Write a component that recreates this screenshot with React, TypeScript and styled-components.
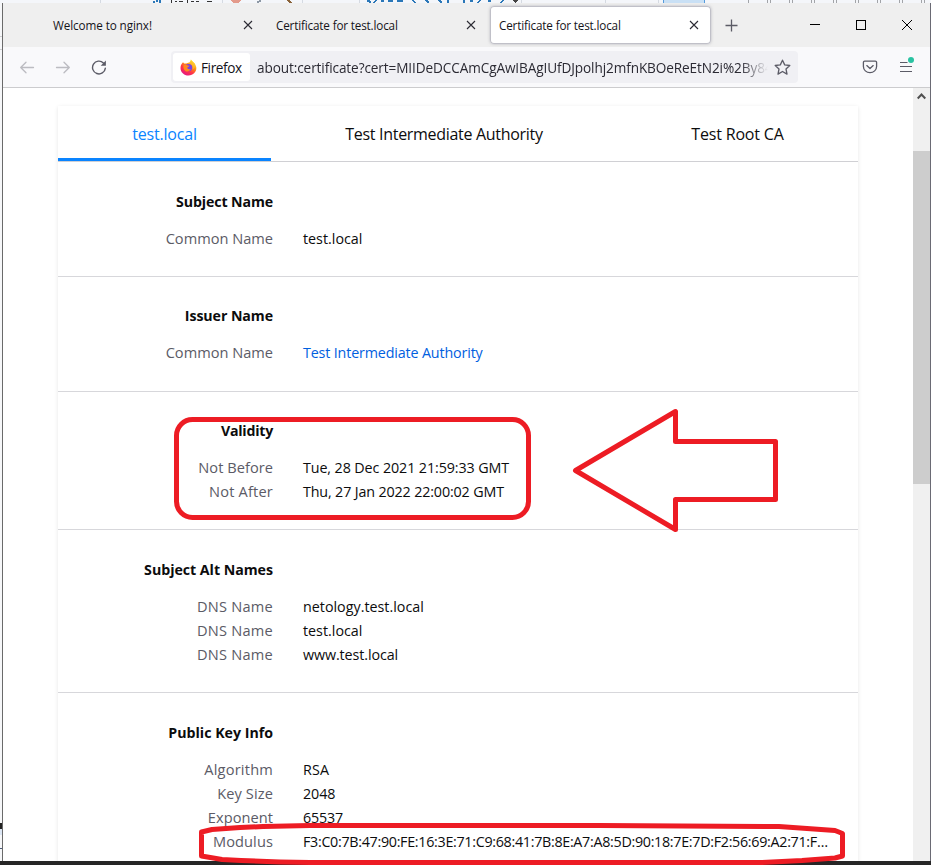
import React from "react";
import styled, { createGlobalStyle } from "styled-components";

const RED = "#ed1c24";

const Global = createGlobalStyle`
  * { box-sizing: border-box; }
  body { margin: 0; overflow: hidden; font-family: "Open Sans", "Noto Sans", sans-serif; color: #15141a; }
`;

const Desktop = styled.div`
  position: relative;
  display: flex;
  flex-direction: column;
  width: 931px;
  height: 865px;
  overflow: hidden;
  background: #262626;
`;

const BehindStrip = styled.div`
  height: 3px;
  flex: none;
  background: #f4f6fa;
  svg { display: block; }
`;

const Middle = styled.div`
  display: flex;
  height: 858px;
  flex: none;
`;

const BehindEdge = styled.div`
  width: 2px;
  flex: none;
  background: #f6f7f9;
  svg { display: block; }
`;

const Window = styled.div`
  flex: 1;
  min-width: 0;
  display: flex;
  flex-direction: column;
  border-left: 1px solid #6a6a6a;
  border-right: 1px solid #6a6a74;
  background: #fff;
`;

const TitleBar = styled.div`
  height: 44px;
  flex: none;
  display: flex;
  align-items: center;
  padding-left: 41px;
  background: #efefef;
`;

const BrowserTabs = styled.div`
  display: flex;
  gap: 2px;
  height: 38px;
`;

const BrowserTab = styled.div<{ $active?: boolean }>`
  width: 221px;
  display: flex;
  align-items: center;
  justify-content: space-between;
  padding: 0 12px 0 9px;
  border-radius: 4px;
  font-size: 11.7px;
  color: #15141a;
  background: ${(p) => (p.$active ? "#fff" : "transparent")};
  box-shadow: ${(p) => (p.$active ? "inset 0 0 0 1px #c0c0c8, 0 0 3px rgba(128,128,142,.5)" : "none")};
`;

const TabTitle = styled.span<{ $track: number }>`
  white-space: nowrap;
  letter-spacing: ${(p) => p.$track}px;
`;

const NewTab = styled.div`
  width: 41px;
  display: flex;
  justify-content: center;
`;

const Controls = styled.div`
  margin-left: auto;
  display: flex;
`;

const ControlButton = styled.div`
  width: 46px;
  height: 43px;
  display: flex;
  align-items: center;
  justify-content: center;
`;

const Toolbar = styled.div`
  height: 41px;
  flex: none;
  display: flex;
  align-items: center;
  padding: 0 6px;
  background: #f9f9fb;
  border-bottom: 1px solid #ccccce;
`;

const ToolButton = styled.div`
  width: 36px;
  height: 32px;
  display: flex;
  align-items: center;
  justify-content: center;
`;

const UrlBar = styled.div`
  margin-left: 54px;
  width: 627px;
  height: 32px;
  display: flex;
  align-items: center;
  padding: 2px;
  border-radius: 4px;
  background: #f0f0f4;
`;

const Identity = styled.div`
  width: 77px;
  height: 28px;
  display: flex;
  align-items: center;
  gap: 4px;
  padding-left: 7px;
  border-radius: 3px;
  background: #fff;
  font-size: 13.6px;
  letter-spacing: -0.4px;
  color: #15141a;
  span { padding-top: 1px; }
`;

const Url = styled.div`
  margin-left: 7px;
  padding-top: 1px;
  width: 511px;
  overflow: hidden;
  white-space: nowrap;
  font-size: 13.6px;
  letter-spacing: -0.1px;
  color: #2b2a33;
  mask-image: linear-gradient(to right, #000 483px, transparent 511px);
`;

const StarSlot = styled.div`
  width: 28px;
  display: flex;
  justify-content: center;
`;

const ToolbarEnd = styled.div`
  margin-left: auto;
  display: flex;
`;

const Viewport = styled.div`
  flex: 1;
  min-height: 0;
  display: flex;
  overflow: hidden;
`;

const Page = styled.div`
  flex: 1;
  padding: 18px 55px 0;
`;

const Card = styled.div`
  height: 800px;
  box-shadow: 0 1px 4px rgba(12, 12, 13, 0.1);
  background: #fff;
`;

const CertTabs = styled.div`
  display: flex;
  height: 56px;
  border-bottom: 1px solid #d0d0d4;
`;

const CertTab = styled.div<{ $w: number; $active?: boolean; $track?: number }>`
  width: ${(p) => p.$w}px;
  height: 55px;
  display: flex;
  align-items: center;
  justify-content: center;
  padding-top: 3px;
  border-bottom: 3px solid ${(p) => (p.$active ? "#0a84ff" : "transparent")};
  color: ${(p) => (p.$active ? "#0a84ff" : "#0c0c0d")};
  font-size: 16px;
  letter-spacing: ${(p) => p.$track ?? 0}px;
`;

const Section = styled.section<{ $h: number; $top: number }>`
  height: ${(p) => p.$h}px;
  padding-top: ${(p) => p.$top}px;
  border-bottom: 1px solid #d7d7db;
  font-size: 14.3px;
  line-height: 24px;
`;

const Heading = styled.h2<{ $track: number }>`
  margin: 0 0 13px;
  width: 215px;
  text-align: right;
  font-size: 14.2px;
  line-height: 24px;
  font-weight: 700;
  letter-spacing: ${(p) => p.$track}px;
  color: #0c0c0d;
`;

const Row = styled.div`
  display: flex;
  gap: 30px;
  height: 24px;
`;

const Label = styled.div<{ $track?: number }>`
  width: 215px;
  text-align: right;
  font-size: 14.6px;
  line-height: 22px;
  color: #5b5b66;
  letter-spacing: ${(p) => p.$track ?? 0}px;
`;

const Value = styled.div<{ $link?: boolean; $track?: number }>`
  white-space: nowrap;
  color: ${(p) => (p.$link ? "#0060df" : "#0c0c0d")};
  letter-spacing: ${(p) => p.$track ?? 0}px;
`;

const Scrollbar = styled.div`
  width: 17px;
  background: #f0f0f0;
  display: flex;
  flex-direction: column;
`;

const ScrollUp = styled.div`
  height: 63px;
  padding: 5px 0 0 4px;
  svg { display: block; }
`;

const Thumb = styled.div`
  height: 333px;
  background: #cdcdcd;
`;

const Markup = styled.svg`
  position: absolute;
  left: 0;
  top: 0;
  pointer-events: none;
`;

type Entry = { label: string; value: string; link?: boolean; lt?: number; vt?: number };
type Group = { title: string; h: number; track: number; top: number; rows: Entry[] };

const groups: Group[] = [
  { title: "Subject Name", h: 115, track: -0.12, top: 28, rows: [{ label: "Common Name", value: "test.local" }] },
  {
    title: "Issuer Name", h: 115, track: -0.08, top: 27,
    rows: [{ label: "Common Name", value: "Test Intermediate Authority", link: true, vt: -0.15 }],
  },
  {
    title: "Validity", h: 138, track: -0.25, top: 27,
    rows: [
      { label: "Not Before", value: "Tue, 28 Dec 2021 21:59:33 GMT", lt: 0.05, vt: -0.1 },
      { label: "Not After", value: "Thu, 27 Jan 2022 22:00:02 GMT", lt: 0.18, vt: -0.14 },
    ],
  },
  {
    title: "Subject Alt Names", h: 163, track: -0.03, top: 28,
    rows: [
      { label: "DNS Name", value: "netology.test.local", lt: 0.22 },
      { label: "DNS Name", value: "test.local", lt: 0.22 },
      { label: "DNS Name", value: "www.test.local", lt: 0.22, vt: -0.1 },
    ],
  },
  {
    title: "Public Key Info", h: 200, track: 0, top: 28,
    rows: [
      { label: "Algorithm", value: "RSA", lt: 0.2, vt: 0.2 },
      { label: "Key Size", value: "2048", lt: 0.1, vt: -0.1 },
      { label: "Exponent", value: "65537", lt: 0.05, vt: -0.2 },
      { label: "Modulus", value: "F3:C0:7B:47:90:FE:16:3E:71:C9:68:41:7B:8E:A7:A8:5D:90:18:7E:7D:F2:56:69:A2:71:F…", lt: 0.1, vt: -0.3 },
    ],
  },
];

const CloseIcon = () => (
  <svg width="10" height="10" viewBox="0 0 10 10" fill="none" stroke="#2b2a33" strokeWidth="1.1">
    <path d="M1 1l8 8M9 1l-8 8" />
  </svg>
);

const BackIcon = () => (
  <svg width="16" height="16" viewBox="0 -0.5 16 16" fill="none" stroke="#bcbcc1" strokeWidth="1.3" strokeLinecap="round" strokeLinejoin="round">
    <path d="M14.5 8H1.7M7 2.7L1.7 8 7 13.3" />
  </svg>
);

const ForwardIcon = () => (
  <svg width="16" height="16" viewBox="0 -0.5 16 16" fill="none" stroke="#bcbcc1" strokeWidth="1.3" strokeLinecap="round" strokeLinejoin="round">
    <path d="M1.5 8h12.8M9 2.7L14.3 8 9 13.3" />
  </svg>
);

const ReloadIcon = () => (
  <svg width="16" height="16" viewBox="0 -0.5 16 16" fill="none" stroke="#5b5b66" strokeWidth="1.4" strokeLinecap="round">
    <path d="M14.3 8.8A6.4 6.4 0 1 1 12.4 3.4" />
    <path d="M14.9 1v5.2H9.7z" fill="#5b5b66" stroke="none" />
  </svg>
);

const FirefoxIcon = () => (
  <svg width="17" height="17" viewBox="0 0 17 17">
    <defs>
      <linearGradient id="fx" x1="0.85" y1="0.05" x2="0.25" y2="1">
        <stop offset="0.05" stopColor="#fff44f" />
        <stop offset="0.35" stopColor="#ff980e" />
        <stop offset="0.65" stopColor="#ff3647" />
        <stop offset="1" stopColor="#e31587" />
      </linearGradient>
      <linearGradient id="fy" x1="0.8" y1="0" x2="0.4" y2="1">
        <stop offset="0" stopColor="#ffe226" />
        <stop offset="1" stopColor="#ff9a2e" />
      </linearGradient>
    </defs>
    <path d="M3 3.2L4.2 4.6 6.3 4.4 9.6 3.2 10.9.6C11.6 2 15.6 4.4 16.3 8.3 16.8 12.8 13.2 16.5 8.5 16.5 3.9 16.5.5 13 .5 8.9.5 6.5 1.5 4.7 3 3.2z" fill="url(#fx)" />
    <circle cx="8.6" cy="8.6" r="3.7" fill="#7542e5" />
    <path d="M3.6 6.2c1.4-.9 3.2-.4 4.2.3l1.7.2c-.3 1-1.8 1.2-2.2 1.9.1 1.8 2 2 3.4 1.1-.8 2.500-3.200 3.500-5.300 2.200C3.500 10.600 3 8 3.600 6.200z" fill="#ff8a1d" />
    <path d="M10.900.6c.3 2 .2 2.700-.9 3.700 1.900.8 3.300 3.200 2.400 6.100 2-.5 3.100-2.300 2.700-5.300C13.800 3.300 11.600 2.500 10.900.6z" fill="url(#fy)" />
  </svg>
);

const StarIcon = () => (
  <svg width="17" height="17" viewBox="0 0 17 17" fill="none" stroke="#5b5b66" strokeWidth="1.3" strokeLinejoin="round">
    <path d="M8.5 1.2l2.2 4.7 5.1.6-3.8 3.5 1 5.1-4.5-2.6L4 15.1l1-5.1L1.2 6.5l5.1-.6z" />
  </svg>
);

const PocketIcon = () => (
  <svg width="16" height="16" viewBox="0 0 16 16" fill="none" stroke="#5b5b66" strokeWidth="1.3" strokeLinecap="round" strokeLinejoin="round">
    <path d="M2.7 2.2h10.6a1.3 1.3 0 0 1 1.3 1.3V7.5a6.6 6.2 0 0 1-13.2 0V3.5a1.3 1.3 0 0 1 1.3-1.3z" />
    <path d="M4.8 6.6L8 9.5l3.2-2.9" />
  </svg>
);

const MenuIcon = () => (
  <svg width="20" height="20" viewBox="0 0 20 20" fill="none">
    <path d="M4 5.500h7.500M4 9.500h12M4 14.500h12" stroke="#5b5b66" strokeWidth="1.2" />
    <circle cx="15" cy="3" r="3" fill="#2ac3a2" />
  </svg>
);

const App = () => (
  <>
    <Global />
    <Desktop>
      <BehindStrip>
        <svg width="931" height="3" viewBox="0 0 931 3" shapeRendering="crispEdges">
          <path d="M100.500 0v3M222.500 0v3M302.500 0v3M359.500 0v3M521.500 0v3M605.500 0v3M658.500 0v3" stroke="#d5dae2" />
          <path d="M153 2h2M156 1h2M160 0v3M367 1h3M369 2h2M376 0l-2 3M381 1h3M388 1h5M397 1h6M412 0l4 3M426 0l3 3M439 0l3 3M448 0v3M464 0v3M470 1h3M480 0l-2 3M488 1h3M503 0l-2 3" stroke="#2a77b8" strokeWidth="1.5" />
          <path d="M171 0v3M175 1h2M179 1h4M187 0v3M191 1h3M196 1h3M207 1.500h5" stroke="#333" />
          <path d="M231 0h10l-3 3h-5z" fill="#e39a8b" />
          <path d="M257 3l4-3" stroke="#8d98a5" strokeWidth="2" />
          <path d="M287 0l5 3" stroke="#8a6238" strokeWidth="2" />
          <path d="M512 0h6l-3 3z" fill="#444" />
          <rect x="663" width="42" height="3" fill="#c9e0f5" />
          <path d="M663.500 0v3M704.500 0v3" stroke="#559bdc" />
          <path d="M748.500 0v3M767.500 0v3M770.500 0v3M789.500 0v3M792.500 0v3M811.500 0v3M814.500 0v3M833.500 0v3M836.500 0v3M855.500 0v3M858.500 0v3M877.500 0v3M880.500 0v3M899.500 0v3M902.500 0v3M921.500 0v3M924.500 0v3" stroke="#a2a4a8" />
        </svg>
      </BehindStrip>
      <Middle>
        <BehindEdge>
          <svg width="2" height="858" viewBox="0 0 2 858" shapeRendering="crispEdges">
            <path d="M0 33.500h2M0 46.500h2" stroke="#cfcfd2" />
            <rect y="820" width="2" height="6" fill="#222" />
            <rect y="826" width="2" height="6" fill="#dce6f4" />
            <path d="M0 845.500h2" stroke="#4b5a78" />
          </svg>
        </BehindEdge>
        <Window>
          <TitleBar>
            <BrowserTabs>
              <BrowserTab><TabTitle $track={-0.09}>Welcome to nginx!</TabTitle><CloseIcon /></BrowserTab>
              <BrowserTab><TabTitle $track={-0.16}>Certificate for test.local</TabTitle><CloseIcon /></BrowserTab>
              <BrowserTab $active><TabTitle $track={-0.16}>Certificate for test.local</TabTitle><CloseIcon /></BrowserTab>
            </BrowserTabs>
            <NewTab>
              <svg width="13" height="13" viewBox="0 0 13 13" stroke="#5b5b66" strokeWidth="1.3"><path d="M6.500.5v12M.5 6.500h12" /></svg>
            </NewTab>
            <Controls>
              <ControlButton><svg width="10" height="10" stroke="#000" shapeRendering="crispEdges"><path d="M0 4.500h10" /></svg></ControlButton>
              <ControlButton><svg width="10" height="10" stroke="#000" fill="none" shapeRendering="crispEdges"><path d="M.5.5h9v9h-9z" /></svg></ControlButton>
              <ControlButton><svg width="10" height="10" stroke="#000"><path d="M0 0l10 10M10 0L0 10" /></svg></ControlButton>
            </Controls>
          </TitleBar>
          <Toolbar>
            <ToolButton><BackIcon /></ToolButton>
            <ToolButton><ForwardIcon /></ToolButton>
            <ToolButton><ReloadIcon /></ToolButton>
            <UrlBar>
              <Identity><FirefoxIcon /><span>Firefox</span></Identity>
              <Url>about:certificate?cert=MIIDeDCCAmCgAwIBAgIUfDJpolhj2mfnKBOeReEtN2i%2By84</Url>
              <StarSlot><StarIcon /></StarSlot>
            </UrlBar>
            <ToolbarEnd>
              <ToolButton><PocketIcon /></ToolButton>
              <ToolButton><MenuIcon /></ToolButton>
            </ToolbarEnd>
          </Toolbar>
          <Viewport>
            <Page>
              <Card>
                <CertTabs>
                  <CertTab $w={213} $active $track={-0.2}>test.local</CertTab>
                  <CertTab $w={346} $track={-0.3}>Test Intermediate Authority</CertTab>
                  <CertTab $w={241} $track={-0.17}>Test Root CA</CertTab>
                </CertTabs>
                {groups.map((g) => (
                  <Section key={g.title} $h={g.h} $top={g.top}>
                    <Heading $track={g.track}>{g.title}</Heading>
                    {g.rows.map((r, i) => (
                      <Row key={i}>
                        <Label $track={r.lt}>{r.label}</Label>
                        <Value $link={r.link} $track={r.vt}>{r.value}</Value>
                      </Row>
                    ))}
                  </Section>
                ))}
              </Card>
            </Page>
            <Scrollbar>
              <ScrollUp>
                <svg width="9" height="7" viewBox="0 0 9 7" fill="none" stroke="#505050" strokeWidth="2"><path d="M.7 5.500l3.800-4 3.800 4" /></svg>
              </ScrollUp>
              <Thumb />
            </Scrollbar>
          </Viewport>
        </Window>
      </Middle>
      <Markup width="931" height="865" viewBox="0 0 931 865" fill="none" stroke={RED} strokeWidth="5" strokeLinejoin="round" strokeLinecap="round">
        <rect x="176.500" y="419.500" width="352" height="98" rx="16" />
        <path d="M575.500 470.500L675.500 411.500V441.500H775.500V499.500H675.500V529.500z" />
        <path d="M201.500 832L212 829.500 240 827.500 263 826.500 310 825.500H600L779 826.500 807 828.500 835 830.500 842.500 833.500V856L835 858 802 860.500 762 862.500H310L280 862 241 860.500 222 859.500 201.500 856z" />
      </Markup>
    </Desktop>
  </>
);

export default App;
